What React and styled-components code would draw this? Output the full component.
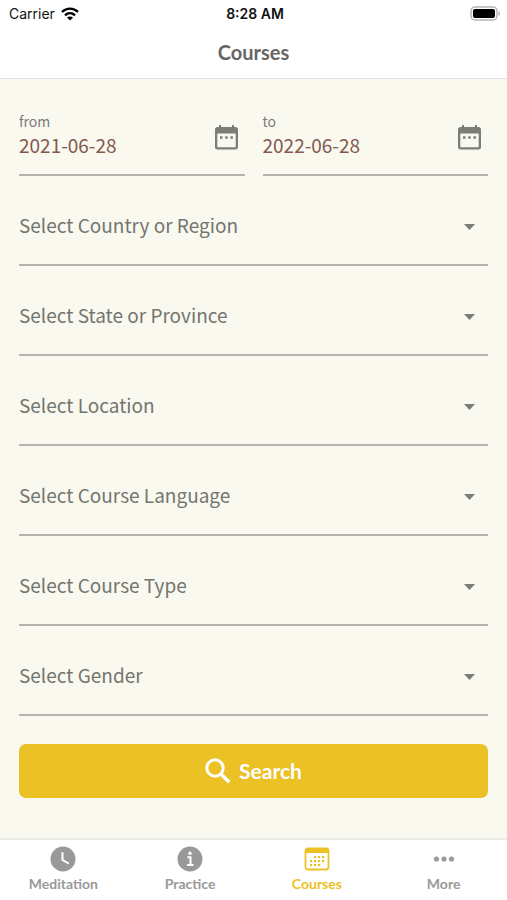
import React, { useState } from 'react';
import styled, { createGlobalStyle } from 'styled-components';

const SELECTS = [
  { id: 'country', label: 'Select Country or Region' },
  { id: 'state', label: 'Select State or Province' },
  { id: 'location', label: 'Select Location' },
  { id: 'language', label: 'Select Course Language' },
  { id: 'type', label: 'Select Course Type' },
  { id: 'gender', label: 'Select Gender' },
];

const TABS = [
  { name: 'Meditation', icon: <ClockIcon /> },
  { name: 'Practice', icon: <InfoIcon /> },
  { name: 'Courses', icon: <CoursesIcon />, active: true },
  { name: 'More', icon: <MoreIcon /> },
];

function WifiIcon() {
  return (
    <svg width="18" height="14" viewBox="0 0 18 14" aria-hidden="true">
      <g fill="none" stroke="#000" strokeWidth="2.4">
        <path d="M1 5C5.600 .5 12.400 .5 17 5" />
        <path d="M4 8.300C6.900 5.500 11.100 5.500 14 8.300" />
      </g>
      <path d="M9 13.600L6 10.600C7.700 9.100 10.300 9.100 12 10.600Z" />
    </svg>
  );
}

function BatteryIcon() {
  return (
    <svg width="31" height="15" viewBox="0 0 31 15" aria-hidden="true">
      <rect x="1" y="1" width="26" height="13" rx="4" fill="#fff" stroke="#b5b5b5" strokeWidth="1.5" />
      <rect x="3" y="3" width="22" height="9" rx="2" />
      <path d="M28.500 5.200C30.600 5.800 30.600 9.200 28.500 9.800Z" fill="#b5b5b5" />
    </svg>
  );
}

function DateIcon() {
  return (
    <svg width="23" height="25" viewBox="0 0 23 25" aria-hidden="true">
      <path
        fill="currentColor"
        fillRule="evenodd"
        d="M4 0h2v2h11V0h2v2h1.500A2.500 2.500 0 0 1 23 4.500v17.500A2.500 2.500 0 0 1 20.500 24.500h-18A2.500 2.500 0 0 1 0 22V4.500A2.500 2.500 0 0 1 2.500 2H4zM2.300 8.500v13.700h18.400V8.500zM5 11.300h2.500v2.500H5zM10.200 11.300h2.500v2.500h-2.500zM15.400 11.300h2.500v2.500h-2.500z"
      />
    </svg>
  );
}

function SearchIcon() {
  return (
    <svg width="26" height="26" viewBox="0 0 26 26" aria-hidden="true">
      <circle cx="10" cy="10" r="8.200" fill="none" stroke="#fff" strokeWidth="3" />
      <path d="M16 16L24.300 24.300" stroke="#fff" strokeWidth="3.600" />
    </svg>
  );
}

function ClockIcon() {
  return (
    <svg width="26" height="26" viewBox="0 0 26 26" aria-hidden="true">
      <circle cx="13" cy="13" r="12.500" fill="currentColor" />
      <path d="M12.500 7v7l5.500 3.200" fill="none" stroke="#fff" strokeWidth="2" strokeLinecap="round" />
    </svg>
  );
}

function InfoIcon() {
  return (
    <svg width="26" height="26" viewBox="0 0 26 26" aria-hidden="true">
      <circle cx="13" cy="13" r="12.500" fill="currentColor" />
      <circle cx="13" cy="7.300" r="1.700" fill="#fff" />
      <path d="M10.300 11.300h3.200v7.500M10 19h6.500" fill="none" stroke="#fff" strokeWidth="2" />
    </svg>
  );
}

function CoursesIcon() {
  const dots = [
    [10, 10], [14, 10], [18, 10],
    [6, 14], [10, 14], [14, 14], [18, 14],
    [6, 18], [10, 18], [14, 18],
  ];
  return (
    <svg width="26" height="26" viewBox="0 0 26 26" aria-hidden="true">
      <rect x="1.500" y="2.500" width="23" height="21" rx="2.500" fill="none" stroke="currentColor" strokeWidth="1.800" />
      <path d="M2 2h22v5H2z" fill="currentColor" />
      {dots.map(([x, y]) => (
        <rect key={`${x}-${y}`} x={x} y={y} width="2.200" height="2.200" fill="currentColor" />
      ))}
    </svg>
  );
}

function MoreIcon() {
  return (
    <svg width="26" height="26" viewBox="0 0 26 26" fill="currentColor" aria-hidden="true">
      <circle cx="5.500" cy="13" r="2.600" />
      <circle cx="13" cy="13" r="2.600" />
      <circle cx="20.500" cy="13" r="2.600" />
    </svg>
  );
}

function DateField({ id, label, value, onChange }) {
  return (
    <DateBox>
      <DateText>
        <DateLabel htmlFor={id}>{label}</DateLabel>
        <DateInput id={id} type="text" value={value} onChange={(e) => onChange(e.target.value)} />
      </DateText>
      <IconButton type="button" aria-label={`Pick ${label} date`}>
        <DateIcon />
      </IconButton>
    </DateBox>
  );
}

function App() {
  const [from, setFrom] = useState('2021-06-28');
  const [to, setTo] = useState('2022-06-28');

  return (
    <Page>
      <GlobalStyle />
      <StatusBar>
        <Carrier>
          Carrier
          <WifiIcon />
        </Carrier>
        <Time>8:28 AM</Time>
        <Battery>
          <BatteryIcon />
        </Battery>
      </StatusBar>
      <Header>
        <Title>Courses</Title>
      </Header>
      <Form onSubmit={(e) => e.preventDefault()}>
        <DateRow>
          <DateField id="from" label="from" value={from} onChange={setFrom} />
          <DateField id="to" label="to" value={to} onChange={setTo} />
        </DateRow>
        {SELECTS.map(({ id, label }) => (
          <SelectBox key={id}>
            <Select id={id} aria-label={label} defaultValue="">
              <option value="">{label}</option>
            </Select>
            <Arrow width="11" height="6" viewBox="0 0 11 6" aria-hidden="true">
              <path d="M0 0h11L5.500 6z" fill="#7d7d77" />
            </Arrow>
          </SelectBox>
        ))}
        <SearchButton type="submit">
          <SearchIcon />
          Search
        </SearchButton>
      </Form>
      <TabBar>
        {TABS.map(({ name, icon, active }) => (
          <Tab key={name} href="#" $active={active}>
            {icon}
            {name}
          </Tab>
        ))}
      </TabBar>
    </Page>
  );
}

const GlobalStyle = createGlobalStyle`
  * {
    box-sizing: border-box;
  }

  body {
    margin: 0;
    font-family: 'Noto Sans CJK SC', 'Noto Sans', sans-serif;
  }
`;

const Page = styled.div`
  display: flex;
  flex-direction: column;
  min-height: 100vh;
  background-color: #f9f9f0;
`;

const StatusBar = styled.div`
  display: grid;
  grid-template-columns: 1fr auto 1fr;
  align-items: center;
  height: 27px;
  padding: 0 6px 0 9px;
  background-color: #fff;
  color: #111;
  font-family: Inter, sans-serif;
  font-size: 14px;
`;

const Carrier = styled.div`
  display: flex;
  align-items: center;
  gap: 6px;
`;

const Time = styled.div`
  font-size: 14px;
  font-weight: 600;
`;

const Battery = styled.div`
  display: flex;
  justify-content: flex-end;
`;

const Header = styled.header`
  display: flex;
  align-items: center;
  justify-content: center;
  height: 52px;
  padding-bottom: 2px;
  border-bottom: 1px solid #e2e2e0;
  background-color: #fff;
`;

const Title = styled.h1`
  margin: 0;
  color: #666;
  font-family: Lato, sans-serif;
  font-size: 20px;
  font-weight: 700;
`;

const Form = styled.form`
  display: flex;
  flex: 1;
  flex-direction: column;
  gap: 10px;
  padding: 17px 19px 40px;
`;

const DateRow = styled.div`
  display: grid;
  grid-template-columns: 1fr 1fr;
  gap: 18px;
`;

const DateBox = styled.div`
  display: flex;
  align-items: center;
  height: 80px;
  padding-right: 7px;
  border-bottom: 2px solid #b5b5ae;
`;

const DateText = styled.div`
  display: flex;
  flex: 1;
  flex-direction: column;
  min-width: 0;
`;

const DateLabel = styled.label`
  color: #7b7b76;
  font-size: 14px;
  line-height: 18px;
`;

const DateInput = styled.input`
  width: 100%;
  height: 28px;
  padding: 0;
  border: none;
  outline: none;
  background-color: transparent;
  color: #85594f;
  font-family: inherit;
  font-size: 19px;
`;

const IconButton = styled.button`
  display: flex;
  padding: 4px 0 0;
  border: none;
  background-color: transparent;
  color: #7d7d77;
  cursor: pointer;
`;

const SelectBox = styled.div`
  display: flex;
  align-items: center;
  position: relative;
  height: 80px;
  padding-top: 4px;
  border-bottom: 2px solid #b5b5ae;
`;

const Select = styled.select`
  width: 100%;
  height: 40px;
  padding: 0 0 6px;
  border: none;
  outline: none;
  appearance: none;
  background-color: transparent;
  color: #75756f;
  font-family: inherit;
  font-size: 19px;
`;

/* sits over the native select */
const Arrow = styled.svg`
  position: absolute;
  right: 13px;
  pointer-events: none;
`;

const SearchButton = styled.button`
  display: flex;
  align-items: center;
  justify-content: center;
  gap: 8px;
  height: 54px;
  margin-top: 18px;
  padding-bottom: 2px;
  border: none;
  border-radius: 7px;
  background-color: #ebc126;
  color: #fff;
  font-family: Lato, sans-serif;
  font-size: 21px;
  font-weight: 700;
  cursor: pointer;
`;

const TabBar = styled.nav`
  display: flex;
  height: 62px;
  border-top: 2px solid #ebebe6;
  background-color: #fff;
`;

const Tab = styled.a`
  display: flex;
  flex: 1;
  flex-direction: column;
  align-items: center;
  padding-top: 6px;
  gap: 4px;
  color: ${({ $active }) => ($active ? '#ebc126' : '#999')};
  font-family: Lato, sans-serif;
  font-size: 14px;
  font-weight: 700;
  line-height: 16px;
  text-decoration: none;
`;

export default App;
